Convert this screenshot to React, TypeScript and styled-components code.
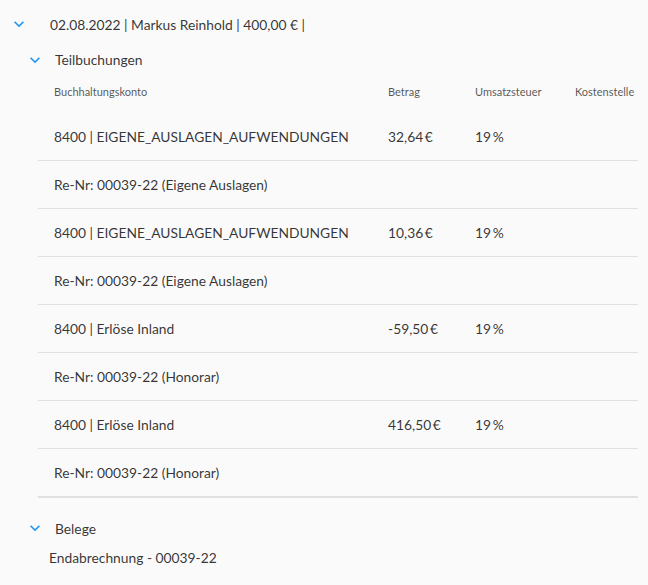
import styled, { createGlobalStyle } from "styled-components";

// styles

const GlobalStyle = createGlobalStyle`
  html, body {
    margin: 0;
    padding: 0;
    background: #fafafa;
  }
  body {
    font-family: Lato, "Open Sans", sans-serif;
    color: rgba(0, 0, 0, 0.8);
  }
`;

const Page = styled.div`
  width: 648px;
  height: 585px;
  background: #fafafa;
  overflow: hidden;
`;

const SectionHead = styled.div<{ $indent: number; $gap: number; $height: number }>`
  display: flex;
  align-items: center;
  height: ${(p) => p.$height}px;
  padding-left: ${(p) => p.$indent}px;
  gap: ${(p) => p.$gap}px;
  font-size: 13.8px;
`;

const Chevron = styled.svg`
  width: 20px;
  height: 20px;
  flex: none;
  fill: #2196f3;
`;

const Table = styled.div`
  margin: 0 10px 0 38px;
  border-bottom: 1px solid #e0e0e0;
`;

const Row = styled.div<{ $header?: boolean }>`
  display: grid;
  grid-template-columns: 334px 87px 100px 1fr;
  align-items: center;
  height: ${(p) => (p.$header ? 42 : 48)}px;
  padding-bottom: ${(p) => (p.$header ? 2 : 0)}px;
  box-sizing: border-box;
  border-bottom: ${(p) => (p.$header ? "none" : "1px solid #e0e0e0")};
  font-size: ${(p) => (p.$header ? 11 : 13.8)}px;
  color: ${(p) => (p.$header ? "rgba(0, 0, 0, 0.68)" : "rgba(0, 0, 0, 0.8)")};
`;

const Cell = styled.div<{ $span?: boolean }>`
  padding-left: 16px;
  white-space: nowrap;
  grid-column: ${(p) => (p.$span ? "1 / -1" : "auto")};
`;

const Spacer = styled.div`
  height: 18px;
`;

const Receipt = styled.div`
  margin-top: 8px;
  padding-left: 49px;
  font-size: 13.8px;
  line-height: 20px;
`;

const ExpandIcon = () => (
  <Chevron viewBox="0 0 24 24">
    <path d="M16.59 8.59L12 13.17 7.41 8.59 6 10l6 6 6-6z" />
  </Chevron>
);

const positions = [
  { konto: "8400 | EIGENE_AUSLAGEN_AUFWENDUNGEN", betrag: "32,64\u2009€", note: "Re-Nr: 00039-22 (Eigene Auslagen)" },
  { konto: "8400 | EIGENE_AUSLAGEN_AUFWENDUNGEN", betrag: "10,36\u2009€", note: "Re-Nr: 00039-22 (Eigene Auslagen)" },
  { konto: "8400 | Erlöse Inland", betrag: "-59,50\u2009€", note: "Re-Nr: 00039-22 (Honorar)" },
  { konto: "8400 | Erlöse Inland", betrag: "416,50\u2009€", note: "Re-Nr: 00039-22 (Honorar)" },
];

const App = () => {
  return (
    <Page>
      <GlobalStyle />
      <SectionHead $indent={9} $gap={21} $height={48}>
        <ExpandIcon />
        <span>02.08.2022 | Markus Reinhold | 400,00 € |</span>
      </SectionHead>
      <SectionHead $indent={25} $gap={10} $height={23}>
        <ExpandIcon />
        <span>Teilbuchungen</span>
      </SectionHead>
      <Table>
        <Row $header>
          <Cell>Buchhaltungskonto</Cell>
          <Cell>Betrag</Cell>
          <Cell>Umsatzsteuer</Cell>
          <Cell>Kostenstelle</Cell>
        </Row>
        {positions.map((p, i) => (
          <div key={i}>
            <Row>
              <Cell>{p.konto}</Cell>
              <Cell>{p.betrag}</Cell>
              <Cell>19&#8201;%</Cell>
              <Cell />
            </Row>
            <Row>
              <Cell $span>{p.note}</Cell>
            </Row>
          </div>
        ))}
      </Table>
      <Spacer />
      <SectionHead $indent={25} $gap={10} $height={24}>
        <ExpandIcon />
        <span>Belege</span>
      </SectionHead>
      <Receipt>Endabrechnung - 00039-22</Receipt>
    </Page>
  );
};

export default App;
